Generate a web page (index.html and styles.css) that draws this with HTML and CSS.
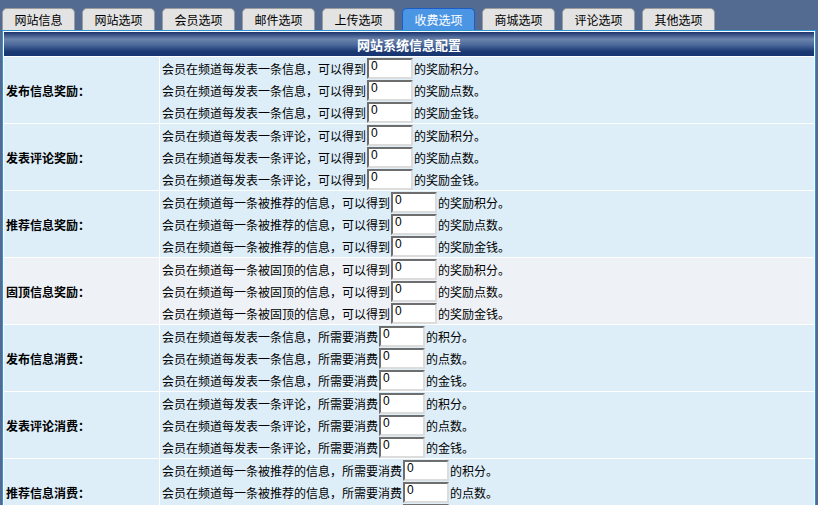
FILE: index.html
```html
<!DOCTYPE html>
<html lang="zh-CN">
<head>
<meta charset="utf-8">
<title>网站系统信息配置</title>
<link rel="stylesheet" href="styles.css">
</head>
<body>
<div class="page">
  <div class="tabs">
    <div class="tab">网站信息</div>
    <div class="tab">网站选项</div>
    <div class="tab">会员选项</div>
    <div class="tab">邮件选项</div>
    <div class="tab">上传选项</div>
    <div class="tab active">收费选项</div>
    <div class="tab">商城选项</div>
    <div class="tab">评论选项</div>
    <div class="tab">其他选项</div>
  </div>
  <table class="config">
    <tr><th colspan="2" class="title">网站系统信息配置</th></tr>
    <tr>
      <td class="label">发布信息奖励：</td>
      <td class="fields">
        <div class="line">会员在频道每发表一条信息，可以得到<input class="num" value="0">的奖励积分。</div>
        <div class="line">会员在频道每发表一条信息，可以得到<input class="num" value="0">的奖励点数。</div>
        <div class="line">会员在频道每发表一条信息，可以得到<input class="num" value="0">的奖励金钱。</div>
      </td>
    </tr>
    <tr>
      <td class="label">发表评论奖励：</td>
      <td class="fields">
        <div class="line">会员在频道每发表一条评论，可以得到<input class="num" value="0">的奖励积分。</div>
        <div class="line">会员在频道每发表一条评论，可以得到<input class="num" value="0">的奖励点数。</div>
        <div class="line">会员在频道每发表一条评论，可以得到<input class="num" value="0">的奖励金钱。</div>
      </td>
    </tr>
    <tr>
      <td class="label">推荐信息奖励：</td>
      <td class="fields">
        <div class="line">会员在频道每一条被推荐的信息，可以得到<input class="num" value="0">的奖励积分。</div>
        <div class="line">会员在频道每一条被推荐的信息，可以得到<input class="num" value="0">的奖励点数。</div>
        <div class="line">会员在频道每一条被推荐的信息，可以得到<input class="num" value="0">的奖励金钱。</div>
      </td>
    </tr>
    <tr class="hover">
      <td class="label">固顶信息奖励：</td>
      <td class="fields">
        <div class="line">会员在频道每一条被固顶的信息，可以得到<input class="num" value="0">的奖励积分。</div>
        <div class="line">会员在频道每一条被固顶的信息，可以得到<input class="num" value="0">的奖励点数。</div>
        <div class="line">会员在频道每一条被固顶的信息，可以得到<input class="num" value="0">的奖励金钱。</div>
      </td>
    </tr>
    <tr>
      <td class="label">发布信息消费：</td>
      <td class="fields">
        <div class="line">会员在频道每发表一条信息，所需要消费<input class="num" value="0">的积分。</div>
        <div class="line">会员在频道每发表一条信息，所需要消费<input class="num" value="0">的点数。</div>
        <div class="line">会员在频道每发表一条信息，所需要消费<input class="num" value="0">的金钱。</div>
      </td>
    </tr>
    <tr>
      <td class="label">发表评论消费：</td>
      <td class="fields">
        <div class="line">会员在频道每发表一条评论，所需要消费<input class="num" value="0">的积分。</div>
        <div class="line">会员在频道每发表一条评论，所需要消费<input class="num" value="0">的点数。</div>
        <div class="line">会员在频道每发表一条评论，所需要消费<input class="num" value="0">的金钱。</div>
      </td>
    </tr>
    <tr>
      <td class="label">推荐信息消费：</td>
      <td class="fields">
        <div class="line">会员在频道每一条被推荐的信息，所需要消费<input class="num" value="0">的积分。</div>
        <div class="line">会员在频道每一条被推荐的信息，所需要消费<input class="num" value="0">的点数。</div>
        <div class="line">会员在频道每一条被推荐的信息，所需要消费<input class="num" value="0">的金钱。</div>
      </td>
    </tr>
  </table>
</div>
</body>
</html>
```
FILE: styles.css
```css
html {
  overflow: hidden;
  background: #536a91;
}
body {
  margin: 0;
  font-family: "SimSun", "Noto Sans CJK SC", sans-serif;
  font-size: 12px;
  color: #000;
  background: #536a91;
}
.page {
  padding: 8px 2px 0 2px;
}
.tabs {
  display: flex;
  gap: 7px;
  height: 22px;
}
.tab {
  box-sizing: border-box;
  width: 73px;
  height: 22px;
  background: #e3e3e3;
  border: 1px solid #9c9c9c;
  border-bottom: none;
  border-radius: 5px 5px 0 0;
  text-align: center;
  line-height: 21px;
  color: #000;
}
.tab.active {
  background: #4a96e4;
  border-color: #1d5cc6;
  color: #fff;
}
.config {
  width: 814px;
  border-collapse: separate;
  border-spacing: 1px;
  background: #fff;
  border: 1px solid #2a96d4;
}
.config td,
.config th {
  padding: 0;
}
.title {
  height: 24px;
  background: linear-gradient(#1d3468 0, #2f4a80 8%, #6b84ac 30%, #4a6799 55%, #1c3a74 80%, #163470 100%);
  color: #fff;
  font-weight: bold;
  font-size: 13px;
  text-align: center;
  vertical-align: middle;
}
.label {
  width: 153px;
  padding-left: 2px !important;
  background: #ddeef9;
  font-weight: bold;
  vertical-align: middle;
}
.fields {
  background: #ddeef9;
  padding: 0 0 0 2px !important;
}
.hover .label,
.hover .fields {
  background: #eef2f7;
}
.line {
  display: flex;
  align-items: center;
  height: 22px;
  white-space: nowrap;
}
.num {
  box-sizing: border-box;
  width: 46px;
  height: 21px;
  margin: 1px 1px 0 1px;
  padding: 0 2px 5px 2px;
  font-family: "Liberation Sans", sans-serif;
  font-size: 12px;
  color: #000;
  background: #fff;
  border: 2px solid;
  border-color: #6e6e6e #dcdcdc #dcdcdc #6e6e6e;
  outline: none;
}
```
